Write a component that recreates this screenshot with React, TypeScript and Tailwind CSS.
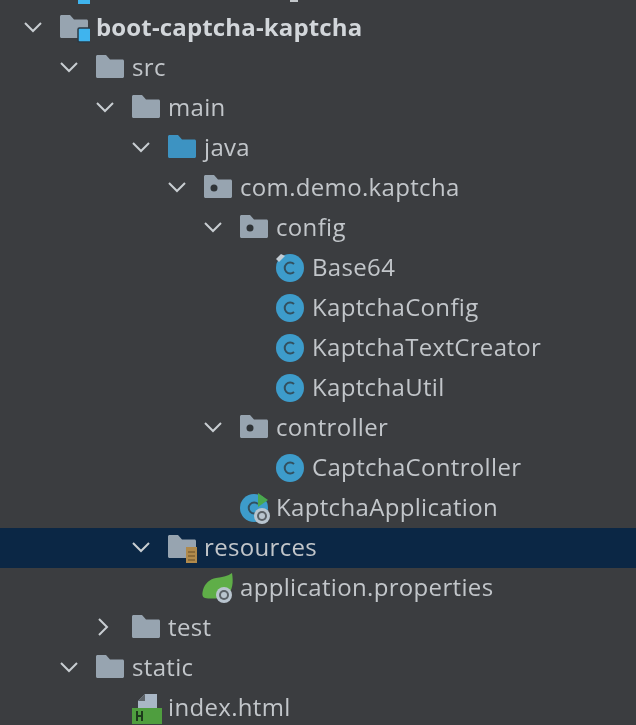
import React from 'react';

type Kind = 'module' | 'folder' | 'source' | 'package' | 'class' | 'classLocked' | 'springApp' | 'resources' | 'springProps' | 'html';

type Row = {
    name: string;
    kind: Kind;
    pad: string;
    arrow?: 'down' | 'right';
    bold?: boolean;
    selected?: boolean;
};

const rows: Row[] = [
    {name: 'boot-captcha-kaptcha', kind: 'module', pad: 'pl-[24px]', arrow: 'down', bold: true},
    {name: 'src', kind: 'folder', pad: 'pl-[60px]', arrow: 'down'},
    {name: 'main', kind: 'folder', pad: 'pl-[96px]', arrow: 'down'},
    {name: 'java', kind: 'source', pad: 'pl-[132px]', arrow: 'down'},
    {name: 'com.demo.kaptcha', kind: 'package', pad: 'pl-[168px]', arrow: 'down'},
    {name: 'config', kind: 'package', pad: 'pl-[204px]', arrow: 'down'},
    {name: 'Base64', kind: 'classLocked', pad: 'pl-[276px]'},
    {name: 'KaptchaConfig', kind: 'class', pad: 'pl-[276px]'},
    {name: 'KaptchaTextCreator', kind: 'class', pad: 'pl-[276px]'},
    {name: 'KaptchaUtil', kind: 'class', pad: 'pl-[276px]'},
    {name: 'controller', kind: 'package', pad: 'pl-[204px]', arrow: 'down'},
    {name: 'CaptchaController', kind: 'class', pad: 'pl-[276px]'},
    {name: 'KaptchaApplication', kind: 'springApp', pad: 'pl-[240px]'},
    {name: 'resources', kind: 'resources', pad: 'pl-[132px]', arrow: 'down', selected: true},
    {name: 'application.properties', kind: 'springProps', pad: 'pl-[204px]'},
    {name: 'test', kind: 'folder', pad: 'pl-[96px]', arrow: 'right'},
    {name: 'static', kind: 'folder', pad: 'pl-[60px]', arrow: 'down'},
    {name: 'index.html', kind: 'html', pad: 'pl-[132px]'},
];

const FOLDER = 'M0 1.5C0 .7.7 0 1.5 0H10l4 4.5h12.5c.8 0 1.5.7 1.5 1.5v15.500c0 .8-.7 1.5-1.5 1.5h-25C.7 23 0 22.3 0 21.5z';

const Clock = ({x, y}: {x: number; y: number}) => (
    <g transform={`translate(${x} ${y})`}>
        <circle r="8" fill="#b9c5cf" />
        <circle r="5" fill="#5a6167" />
        <circle r="3" fill="#b9c5cf" />
    </g>
);

const Icon = ({kind}: {kind: Kind}) => {
    if (kind === 'class' || kind === 'classLocked') {
        return (
            <svg width="30" height="30" viewBox="0 0 30 30" className="shrink-0">
                <circle cx="14" cy="15" r="14" fill="#3d9ccb" />
                <path d="M18 11a5.5 5.5 0 1 0 0 8" fill="none" stroke="#33505f" strokeWidth="2" />
                {kind === 'classLocked' && <path d="M0 6l5-5 4 2-6 6z" fill="#c3ccd3" />}
            </svg>
        );
    }
    if (kind === 'springApp') {
        return (
            <svg width="32" height="32" viewBox="0 0 32 32" className="shrink-0">
                <circle cx="14" cy="16" r="14" fill="#3d9ccb" />
                <path d="M18 12a5.5 5.5 0 1 0 0 8" fill="none" stroke="#33505f" strokeWidth="2" />
                <path d="M18 1l10 7-10 7z" fill="#4aa84e" />
                <Clock x={22} y={24} />
            </svg>
        );
    }
    if (kind === 'springProps') {
        return (
            <svg width="32" height="32" viewBox="0 0 32 32" className="ml-[-2px] shrink-0">
                <path d="M30 1c1.500 9 1 18-6 23-7 3-16 3-21 2-3-1-3-4-2-8 2-7 7-11 13-12 7-1 12-2 16-5z" fill="#5fae48" />
                <Clock x={22} y={23} />
            </svg>
        );
    }
    if (kind === 'html') {
        return (
            <svg width="32" height="32" viewBox="0 0 32 32" className="shrink-0">
                <path d="M6 9l7-7h12v14H6z" fill="#a9b7c6" />
                <path d="M6 9h7V2z" fill="#5c6268" />
                <rect x="0" y="16" width="30" height="16" fill="#4f9e3f" />
                <path d="M5 19v10M10 19v10M5 24h5" stroke="#1d3a1c" strokeWidth="2" fill="none" />
            </svg>
        );
    }
    const fill = kind === 'source' ? '#3d93c2' : '#97a4b0';
    return (
        <svg width="30" height="30" viewBox="0 0 30 30" className="shrink-0">
            <path d={FOLDER} transform="translate(0 2)" fill={fill} />
            {kind === 'package' && <circle cx="10" cy="15" r="3.5" fill="#2f3438" />}
            {kind === 'module' && <rect x="18" y="15" width="13" height="14" rx="1.5" fill="#3fb4ee" stroke="#2b3a45" strokeWidth="1.5" />}
            {kind === 'resources' && (
                <g>
                    <rect x="18" y="14" width="11" height="16" fill="#b08a4c" />
                    <path d="M20 19h7M20 23h7M20 27h7" stroke="#7d6233" strokeWidth="1.5" />
                </g>
            )}
        </svg>
    );
};

const Arrow = ({dir}: {dir?: 'down' | 'right'}) => (
    <span className="flex w-[36px] shrink-0 items-center">
        {dir === 'down' && (
            <svg width="18" height="12" viewBox="0 0 18 12" fill="none" stroke="#c9ced2" strokeWidth="2" className="mt-[-2px]">
                <path d="M1 2l8 8 8-8" />
            </svg>
        )}
        {dir === 'right' && (
            <svg width="18" height="18" viewBox="0 0 18 18" fill="none" stroke="#c9ced2" strokeWidth="2" className="ml-[-1px] mt-[-2px]">
                <path d="M4 1l8 8-8 8" />
            </svg>
        )}
    </span>
);

const App = () => {
    return (
        <div className="h-[725px] w-[636px] overflow-hidden bg-[#3b3d40] font-['Open_Sans',sans-serif] text-[24px] tracking-[0.33px] text-[#c2c6ca] blur-[0.7px]">
            {/* tail of the row scrolled off the top */}
            <div className="flex h-[8px] items-start pl-[78px]">
                <div className="h-[4px] w-[12px] bg-[#3fb4ee]" />
                <div className="ml-[200px] h-[2px] w-[8px] bg-[#c2c6ca]" />
            </div>
            {rows.map((row) => (
                <div
                    key={row.name}
                    className={`flex h-[40px] items-center whitespace-nowrap ${row.pad} ${row.selected ? 'bg-[#0b2745]' : ''}`}
                >
                    {row.arrow && <Arrow dir={row.arrow} />}
                    <span className="flex w-[36px] shrink-0 items-center">
                        <Icon kind={row.kind} />
                    </span>
                    <span className={`pb-[3px] ${row.bold ? 'font-bold tracking-[0.15px] text-[#d2d6da]' : ''}`}>{row.name}</span>
                </div>
            ))}
        </div>
    );
};

export default App;
